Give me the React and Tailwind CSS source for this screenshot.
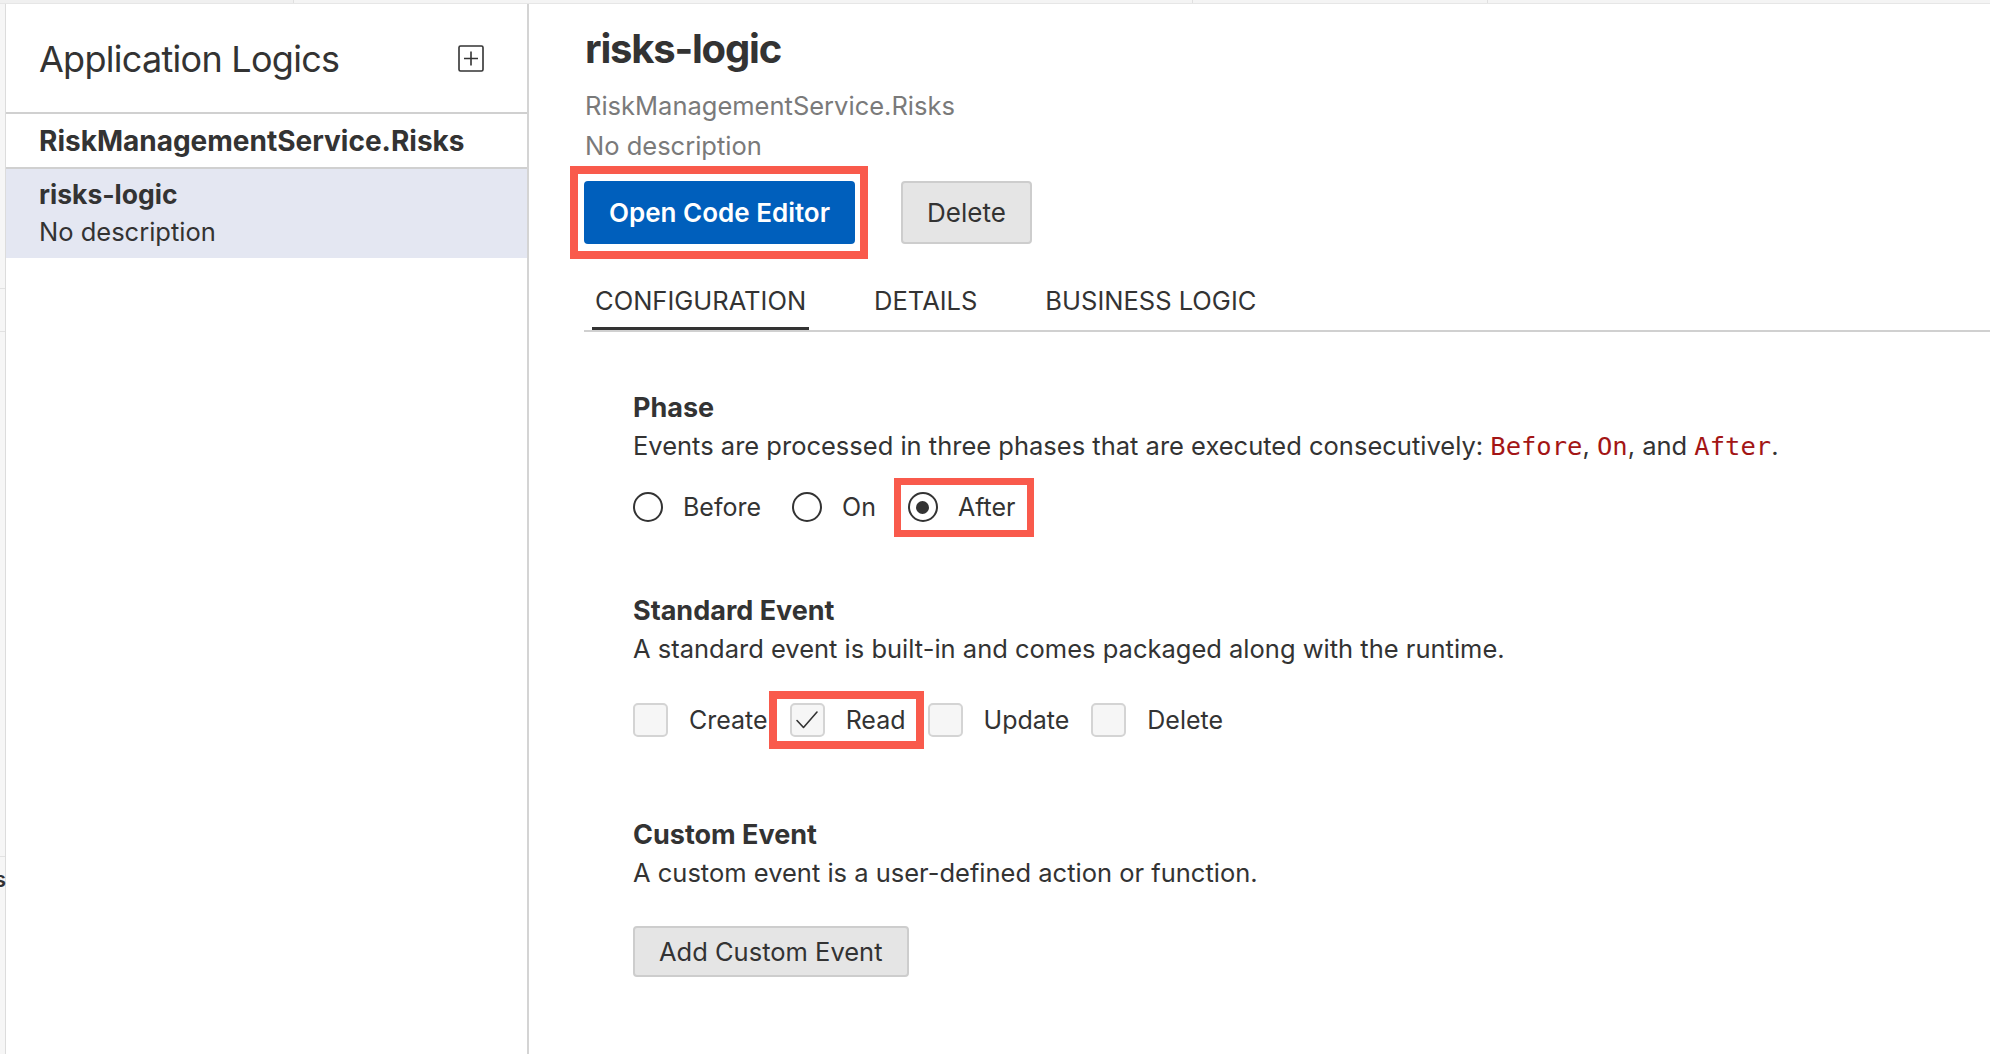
import React from 'react'

function Radio({ checked }) {
  return (
    <span className="w-[30px] h-[30px] rounded-full border-2 border-[#333] flex items-center justify-center shrink-0">
      {checked && <span className="w-[13px] h-[13px] rounded-full bg-[#333]" />}
    </span>
  )
}

function Checkbox({ checked }) {
  return (
    <span className="w-[35px] h-[34px] rounded-[5px] border-2 border-[#d4d4d4] bg-[#f6f6f6] flex items-center justify-center shrink-0">
      {checked && (
        <svg width="26" height="22" viewBox="0 0 26 22" fill="none">
          <path d="M3 11.5 L9.5 18.5 L23 3" stroke="#333" strokeWidth="1.6" strokeLinecap="round" strokeLinejoin="round" />
        </svg>
      )}
    </span>
  )
}

function Code({ children }) {
  return <span className="font-['DejaVu_Sans_Mono',monospace] text-[25.5px] text-[#a31515]">{children}</span>
}

export default function App() {
  const tabs = ['CONFIGURATION', 'DETAILS', 'BUSINESS LOGIC']

  return (
    <div className="w-[1990px] h-[1054px] bg-white text-[#333] font-['Inter','Noto_Sans',sans-serif] flex flex-col overflow-hidden">
      {/* top strip left over from the window behind */}
      <div className="h-[4px] bg-[#f4f4f4] border-b border-[#e6e6e6] flex shrink-0">
        <div className="w-[294px] border-r border-[#e0e0e0] bg-[#f0f0f0]" />
        <div className="w-[899px] border-r border-[#e0e0e0]" />
        <div className="w-[295px] border-r border-[#e0e0e0]" />
        <div className="flex-1" />
      </div>

      <div className="flex flex-1 min-h-0">
        {/* gutter */}
        <div className="w-[6px] bg-[#f6f6f6] border-r border-[#dcdcdc] shrink-0 flex flex-col">
          <div className="mt-[284px] h-px bg-[#e2e2e2]" />
          <div className="mt-[42px] h-px bg-[#e2e2e2]" />
          <div className="mt-[524px] h-px bg-[#e2e2e2]" />
          <div className="mt-[10px] -ml-[6px] text-[22px] leading-[24px] font-semibold">s</div>
        </div>

        {/* sidebar */}
        <div className="w-[523px] border-r-2 border-[#d4d4d4] shrink-0 flex flex-col">
          <div className="h-[110px] flex items-center justify-between pl-[33px] pr-[43px] border-b-2 border-[#d0d0d0]">
            <h2 className="text-[36px] leading-[44px] tracking-[-0.02em] mt-[2px]">Application Logics</h2>
            <svg width="26" height="27" viewBox="0 0 26 27" fill="none">
              <rect x="1" y="1" width="24" height="25" rx="1.5" stroke="#333" strokeWidth="1.6" />
              <path d="M13 6.5 V20.5 M6 13.5 H20" stroke="#333" strokeWidth="1.6" />
            </svg>
          </div>
          <div className="h-[55px] border-b-2 border-[#d0d0d0] pl-[33px] flex items-center">
            <span className="text-[28px] leading-[50px] font-bold">RiskManagementService.Risks</span>
          </div>
          <div className="bg-[#e4e7f2] pl-[33px] pt-[7px] pb-[8px] text-[25.5px] leading-[37px]">
            <div className="font-bold text-[26.5px]">risks-logic</div>
            <div>No description</div>
          </div>
        </div>

        {/* main */}
        <div className="flex-1 min-w-0 pl-[55px] pt-[21px]">
          <h1 className="text-[40px] leading-[48px] font-bold ml-px tracking-[-0.03em]">risks-logic</h1>
          <div className="mt-[13px] ml-px text-[25.5px] leading-[40px] text-[#7a7a7a]">
            <div>RiskManagementService.Risks</div>
            <div>No description</div>
          </div>

          <div className="mt-[15px] flex items-center gap-[46px]">
            <div className="relative">
              <button className="h-[63px] px-[25px] rounded-[4px] bg-[#005fbc] text-white text-[26px] font-semibold">
                Open Code Editor
              </button>
              <span className="absolute -left-[14px] -right-[13px] -top-[15px] -bottom-[15px] border-[8px] border-[#f95a4c] pointer-events-none" />
            </div>
            <button className="h-[63px] px-[24px] rounded-[4px] bg-[#e5e5e5] border-2 border-[#cdcdcd] text-[26px]">
              Delete
            </button>
          </div>

          <div className="mt-[42px] flex gap-[62px] pl-[8px] border-b-2 border-[#d0d0d0]">
            {tabs.map((t, i) => (
              <div
                key={t}
                className={`px-[3px] pb-[11px] text-[25.5px] leading-[30px] border-b-[3px] ${
                  i === 0 ? 'border-[#333]' : 'border-transparent'
                }`}
              >
                {t}
              </div>
            ))}
          </div>

          <div className="pl-[49px] text-[25.5px] leading-[38px]">
            {/* Phase */}
            <div className="mt-[57px] font-bold text-[27px]">Phase</div>
            <div>
              Events are processed in three phases that are executed consecutively: <Code>Before</Code>, <Code>On</Code>, and <Code>After</Code>.
            </div>
            <div className="mt-[23px] flex items-center gap-[31px] text-[25px]">
              <div className="flex items-center gap-[20px]">
                <Radio />
                <span>Before</span>
              </div>
              <div className="flex items-center gap-[20px]">
                <Radio />
                <span>On</span>
              </div>
              <div className="relative flex items-center gap-[20px] ml-[1px]">
                <Radio checked />
                <span>After</span>
                <span className="absolute -left-[14px] -right-[19px] -top-[10px] -bottom-[11px] border-[7px] border-[#f95a4c] pointer-events-none" />
              </div>
            </div>

            {/* Standard Event */}
            <div className="mt-[66px] font-bold text-[27px]">Standard Event</div>
            <div>A standard event is built-in and comes packaged along with the runtime.</div>
            <div className="mt-[33px] flex items-center gap-[22px] text-[25px]">
              <div className="flex items-center gap-[21px]">
                <Checkbox />
                <span>Create</span>
              </div>
              <div className="relative flex items-center gap-[21px]">
                <Checkbox checked />
                <span>Read</span>
                <span className="absolute -left-[21px] -right-[18px] -top-[10px] -bottom-[10px] border-[8px] border-[#f95a4c] pointer-events-none" />
              </div>
              <div className="flex items-center gap-[21px]">
                <Checkbox />
                <span>Update</span>
              </div>
              <div className="flex items-center gap-[21px]">
                <Checkbox />
                <span>Delete</span>
              </div>
            </div>

            {/* Custom Event */}
            <div className="mt-[77px] font-bold text-[27px]">Custom Event</div>
            <div>A custom event is a user-defined action or function.</div>
            <button className="mt-[34px] h-[51px] px-[24px] rounded-[4px] bg-[#e5e5e5] border-2 border-[#cdcdcd] text-[25.5px] leading-[38px]">
              Add Custom Event
            </button>
          </div>
        </div>
      </div>
    </div>
  )
}
